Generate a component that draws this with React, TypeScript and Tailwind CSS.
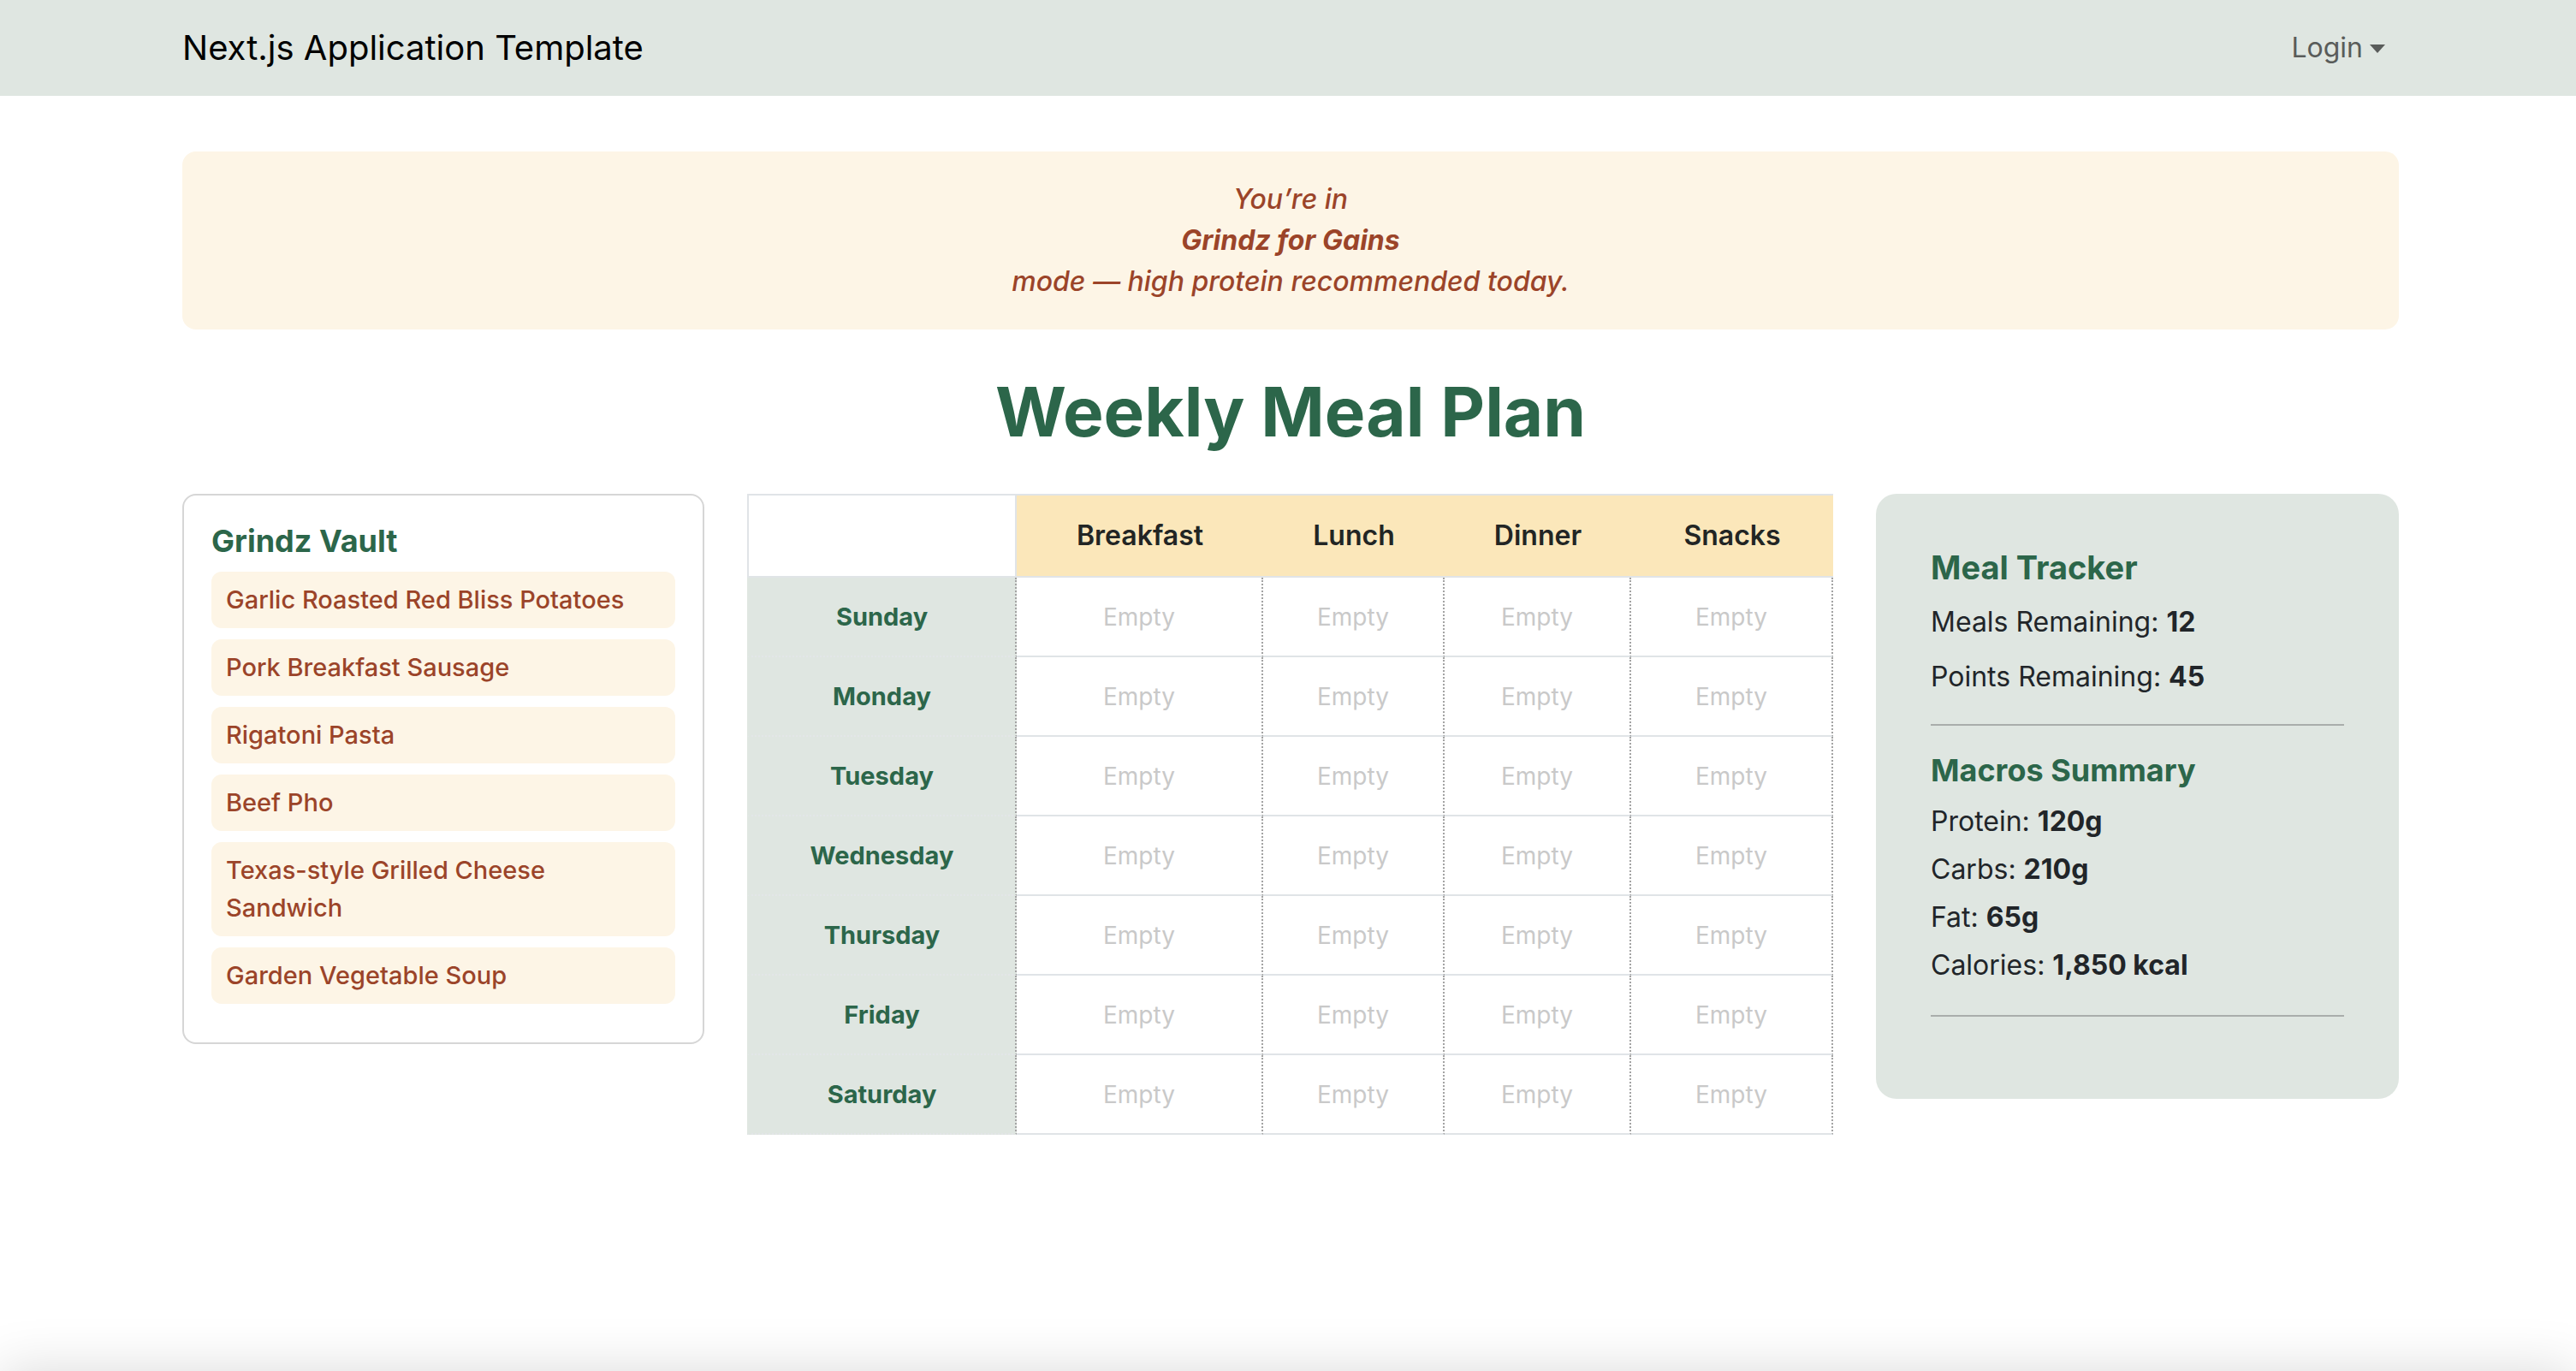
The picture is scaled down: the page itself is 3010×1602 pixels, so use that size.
import React from "react";

const vault = [
  "Garlic Roasted Red Bliss Potatoes",
  "Pork Breakfast Sausage",
  "Rigatoni Pasta",
  "Beef Pho",
  "Texas-style Grilled Cheese Sandwich",
  "Garden Vegetable Soup",
];

const days = ["Sunday", "Monday", "Tuesday", "Wednesday", "Thursday", "Friday", "Saturday"];
const meals = ["Breakfast", "Lunch", "Dinner", "Snacks"];

function Navbar() {
  return (
    <nav className="h-[112px] bg-[#dfe6e1] flex items-center">
      <div className="ml-[213px] w-[2590px] flex items-center justify-between">
        <a className="text-[40px] leading-[60px] text-black">Next.js Application Template</a>
        <button className="flex items-center text-[32px] leading-[48px] text-[#595c5a] pr-[16px]">
          Login
          <span className="ml-[8px] mt-[2px] w-0 h-0 border-x-[9.5px] border-x-transparent border-t-[10px] border-t-[#595c5a]" />
        </button>
      </div>
    </nav>
  );
}

function GrindzVault() {
  return (
    <div className="w-[610px] shrink-0 self-start rounded-[16px] border-2 border-[#d6d6d6] bg-white p-[32px]">
      <h5 className="text-[36px] leading-[43px] font-bold text-[#2c664a] mb-[14px]">Grindz Vault</h5>
      {vault.map((item) => (
        <div
          key={item}
          className="mb-[13px] rounded-[12px] bg-[#fdf5e6] pl-[17px] pr-[24px] py-[11px] text-[29px] leading-[44px] font-medium text-[#9b4429]"
        >
          {item}
        </div>
      ))}
    </div>
  );
}

function MealGrid() {
  return (
    <table className="w-[1269px] shrink-0 self-start table-fixed border-separate border-spacing-0">
      <colgroup>
        <col className="w-[315px]" />
        <col className="w-[288px]" />
        <col className="w-[212px]" />
        <col className="w-[218px]" />
        <col className="w-[236px]" />
      </colgroup>
      <thead>
        <tr className="h-[98px]">
          <th className="bg-white border-2 border-[#e0e4e7]" />
          {meals.map((m) => (
            <th
              key={m}
              className="bg-[#fbe7ba] border-y-2 border-[#e0e4e7] text-[32px] font-semibold text-[#222524]"
            >
              {m}
            </th>
          ))}
        </tr>
      </thead>
      <tbody>
        {days.map((d) => (
          <tr key={d} className="h-[93px]">
            <td className="bg-[#dfe6e1] border-l-2 border-l-[#dfe6e1] border-b-2 border-b-[#e3e6e8] border-r-2 border-r-[#a3a3a3] border-dotted text-center text-[29px] font-bold text-[#2c664a]">
              {d}
            </td>
            {meals.map((m) => (
              <td
                key={m}
                className="border-b-2 border-b-[#e0e4e7] border-solid border-r-2 border-r-[#a3a3a3] text-center text-[28px] text-[#c9c9c9]"
                style={{ borderRightStyle: "dotted" }}
              >
                Empty
              </td>
            ))}
          </tr>
        ))}
      </tbody>
    </table>
  );
}

function Tracker() {
  return (
    <div className="w-[611px] shrink-0 self-start rounded-[24px] bg-[#dfe6e1] px-[64px] pt-[62px] pb-[64px] text-[#212529]">
      <h5 className="text-[38px] leading-[48px] font-bold text-[#2c664a] mb-[16px]">Meal Tracker</h5>
      <p className="text-[32px] leading-[48px] mb-[16px]">
        Meals Remaining: <strong className="font-bold">12</strong>
      </p>
      <p className="text-[32px] leading-[48px] mb-[16px]">
        Points Remaining: <strong className="font-bold">45</strong>
      </p>
      <hr className="border-t-2 border-[#a9adab] mt-[31px] mb-[28px]" />
      <h5 className="text-[36px] leading-[48px] font-bold text-[#2c664a] mb-[12px]">Macros Summary</h5>
      <p className="text-[32px] leading-[48px] mb-[8px]">
        Protein: <strong className="font-bold">120g</strong>
      </p>
      <p className="text-[32px] leading-[48px] mb-[8px]">
        Carbs: <strong className="font-bold">210g</strong>
      </p>
      <p className="text-[32px] leading-[48px] mb-[8px]">
        Fat: <strong className="font-bold">65g</strong>
      </p>
      <p className="text-[32px] leading-[48px] mb-[8px]">
        Calories: <strong className="font-bold">1,850 kcal</strong>
      </p>
      <hr className="border-t-2 border-[#a9adab] mt-[34px] mb-[32px]" />
    </div>
  );
}

export default function App() {
  return (
    <div className="bg-white font-['Inter','Noto_Sans',sans-serif]">
      <div className="min-h-[1602px]">
        <Navbar />
        <main className="ml-[213px] w-[2590px] pt-[65px]">
          {/* mode banner */}
          <div className="rounded-[16px] bg-[#fdf5e6] py-[32px] text-center italic font-medium text-[32px] leading-[48px] text-[#9b4429]">
            <div>You’re in</div>
            <div className="font-bold">Grindz for Gains</div>
            <div>mode — high protein recommended today.</div>
          </div>
          <h1 className="mt-[48px] mb-[48px] text-center text-[80px] leading-[96px] font-bold text-[#2c664a]">
            Weekly Meal Plan
          </h1>
          <div className="flex gap-[50px]">
            <GrindzVault />
            <MealGrid />
            <Tracker />
          </div>
        </main>
      </div>
      <footer className="h-[200px] bg-white shadow-[0_0_60px_rgba(0,0,0,0.15)]" />
    </div>
  );
}
